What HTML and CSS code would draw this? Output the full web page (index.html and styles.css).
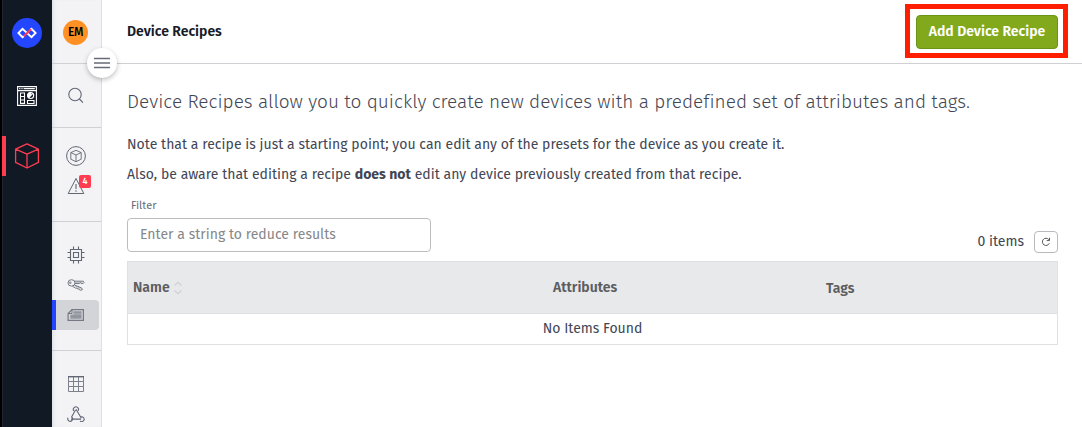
FILE: index.html
```html
<!DOCTYPE html>
<html lang="en">
<head>
<meta charset="utf-8">
<title>Device Recipes</title>
<link rel="stylesheet" href="styles.css">
</head>
<body>
<div class="app">
  <nav class="rail">
    <a class="rail-logo"><svg width="30" height="30" viewBox="0 0 30 30" fill="none"><circle cx="15" cy="15" r="15" fill="#2546ff"/><path d="M11.800 18.200 10.500 19.200 6.400 15l4.100-4.200 9 8.400L23.600 15l-4.100-4.200-1.300 1" stroke="#fff" stroke-width="1.900"/><path d="m11.800 18.200 7.200-6.900" stroke="#ff3b52" stroke-width="1.900"/></svg></a>
    <a class="rail-item"><svg width="20" height="20" viewBox="0 0 20 20" fill="none" stroke="#fff" stroke-width="1.1"><path d="M.6.6h18.8v18.8H.6zM.6 4.6h18.8M2.2 2.6h1.2M4.4 2.6h1.2M6.6 2.6h11.2M3.5 7h4v10.400h-4zM3.500 10.500h4M3.500 14h4M10.500 14.500h6.500v3h-6.500z"/><circle cx="13.700" cy="9.500" r="3"/><path d="M13.700 9.500V6.500a3 3 0 0 0-2.200 5.100z" fill="#fff"/><path d="m11.500 11.700 4.400-4.400"/></svg></a>
    <a class="rail-item active"><svg width="26" height="26" viewBox="0 0 26 26" fill="none" stroke="#ff3d51" stroke-width="1.3" stroke-linejoin="round"><path d="m13 .8 11.400 5.400v13.200L13 25 1.600 19.400V6.200zM1.600 6.200 13 11.200l11.400-5M13 11.200V25"/></svg></a>
  </nav>
  <aside class="side">
    <div class="side-user"><span class="avatar">EM</span></div>
    <div class="side-search"><svg width="18" height="18" viewBox="0 0 18 18" fill="none" stroke="#616673" stroke-width="1.100"><circle cx="8" cy="7.500" r="6.200"/><path d="m12.400 12 3.600 3.700"/></svg></div>
    <div class="side-group">
      <a class="side-item"><svg width="20" height="20" viewBox="0 0 20 20" fill="none" stroke="#616673"><circle cx="10" cy="10" r="9.400"/><path d="m10 4.300 5.200 2.300v6.600L10 15.700l-5.200-2.500V6.600zM4.800 6.600 10 9l5.200-2.400M10 9v6.700" stroke-width=".9"/></svg></a>
      <a class="side-item"><svg width="18" height="18" viewBox="0 0 18 18" fill="none" stroke="#616673"><path d="M9 1.500 16.800 16.500H1.200z"/><path d="M9 7v5M9 13.200v1.600" stroke-width="1.600" stroke="#8b8f98"/></svg><span class="badge">4</span></a>
    </div>
    <div class="side-group tools">
      <a class="side-item"><svg width="18" height="18" viewBox="0 0 18 18" fill="none" stroke="#616673" stroke-width="1.100"><path d="M3.500 3.500h11v11h-11zM6.500 6.500h5v5h-5zM6.500.5v3M11.500.5v3M6.500 14.500v3M11.500 14.500v3M.5 6.500h3M.5 11.500h3M14.500 6.500h3M14.500 11.500h3"/></svg></a>
      <a class="side-item"><svg width="18" height="14" viewBox="0 0 18 14" fill="none" stroke="#747983" stroke-width="1"><ellipse cx="4.500" cy="4.900" rx="3.500" ry="3.200"/><circle cx="3.300" cy="4.700" r=".8"/><path d="M7.400 3.200h8.900l.8 1.100-.9 1.200h-2l-.8-.7-.9.700H8M7.300 6.900l7.400 3.100.6 1.800-1.400.4-1.300-.2-.7-1.200-1.200.2-.8-1-1.200.2L5.300 8.100"/><path d="M8.500 4.300h6.700M8 7.800l5.600 2.600" stroke-width=".5"/></svg></a>
      <a class="side-item selected"><svg width="18" height="14" viewBox="0 0 18 14" fill="none" stroke="#747983" stroke-width="1.200"><path d="M5 1.600h11.400v10.800H1.100V5.500z"/><path d="M5 1.600v3.900H1.100" stroke-width="1"/><path d="M6.500 3.500h8v2h-8zM3.500 6.500h11v3.800h-11z" fill="#a2a5ad" stroke="none"/><path d="M6.500 4h8M6.500 6h8M3.300 8.100h11.200M3.300 10.100h11.200" stroke-width=".7"/></svg></a>
    </div>
    <div class="side-group last">
      <a class="side-item"><svg width="16" height="16" viewBox="0 0 16 16" fill="none" stroke="#7d818c"><path d="M.5.500h15v15H.5zM.5 5.500h15M.5 10.500h15M5.500.5v15M10.500.5v15"/><path d="M0 .7h16" stroke="#616673" stroke-width="1.400"/></svg></a>
      <a class="side-item"><svg width="18" height="16" viewBox="0 0 18 16" fill="none" stroke="#616673" stroke-width="1.100"><path d="M6.800 5A2.600 2.600 0 1 1 11.200 4.700M4.900 11.200a2.400 2.400 0 1 1-3.800.5M13.100 15a2.400 2.400 0 1 0 .3-3.800M9 3.300l5.400 9M8.500 4 4.300 11.400M4 13.100h10"/></svg></a>
    </div>
  </aside>
  <main class="main">
    <header class="top">
      <h1 class="title">Device Recipes</h1>
      <div class="highlight"><button class="add">Add Device Recipe</button></div>
    </header>
    <section class="content">
      <p class="lead">Device Recipes allow you to quickly create new devices with a predefined set of attributes and tags.</p>
      <p class="note first">Note that a recipe is just a starting point; you can edit any of the presets for the device as you create it.</p>
      <p class="note second">Also, be aware that editing a recipe <b>does not</b> edit any device previously created from that recipe.</p>
      <div class="toolbar">
        <label class="filter"><span class="filter-label">Filter</span><span class="input">Enter a string to reduce results</span></label>
        <div class="count"><span class="count-text">0 items</span><button class="refresh"><svg width="10" height="10" viewBox="0 0 10 10" fill="none" stroke="#555"><path d="M8.300 6.300A3.600 3.600 0 1 1 7.800 2.600M8.500.8v2.800H5.700"/></svg></button></div>
      </div>
      <div class="table">
        <div class="thead">
          <span class="th name">Name<svg width="10" height="14" viewBox="0 0 10 14" fill="none" stroke="#d0d1d4" stroke-width="1.200"><path d="m1.500 4.500 3.500-3.300 3.500 3.300M1.500 9.500 5 12.800l3.500-3.300"/></svg></span>
          <span class="th attributes">Attributes</span>
          <span class="th tags">Tags</span>
        </div>
        <div class="empty"><span class="empty-text">No Items Found</span></div>
      </div>
    </section>
  </main>
  <button class="menu"><svg width="16" height="12" viewBox="0 0 16 12" stroke="#666b77" stroke-width="1.400"><path d="M0 1.500h16M0 6h16M0 10.500h16"/></svg></button>
</div>
</body>
</html>
```

FILE: styles.css
```css
* { box-sizing: border-box; }
body { margin: 0; background: #fff; color: #424654; font: 400 14px/20px "Fira Sans", "Noto Sans", sans-serif; }
h1, p { margin: 0; }
button { font: inherit; padding: 0; }
svg { display: block; flex: none; }
.app { position: relative; display: flex; width: 1082px; height: 427px; overflow: hidden; }

.rail { width: 52px; flex: none; background: #111925; border-left: 2px solid #000; box-shadow: inset 1px 0 #202731; display: flex; flex-direction: column; padding-top: 18px; }
.rail-logo { height: 30px; padding-left: 10px; }
.rail-item { height: 40px; display: flex; align-items: center; justify-content: center; margin-top: 28px; }
.rail-item.active { margin-top: 20px; border-left: 4px solid #ff3d51; padding: 0 4px 0 0; }

.side { width: 50px; flex: none; background: #f3f3f6; border-right: 1px solid #dedfe2; box-shadow: inset 4px 0 4px -3px #d9dadd; display: flex; flex-direction: column; }
.side > div { flex: none; }
.side-user { height: 64px; border-bottom: 1px solid #cfd0d3; padding: 20px 0 0 11px; }
.avatar { display: block; width: 25px; height: 25px; border-radius: 50%; background: #ff9124; color: #000; font-size: 12px; font-weight: 500; line-height: 24px; letter-spacing: -.3px; text-align: center; }
.side-search { height: 64px; border-bottom: 1px solid #cfd0d3; padding: 23px 0 0 15px; }
.side-group { height: 94px; border-bottom: 1px solid #cfd0d3; padding-top: 13px; }
.side-group.tools { height: 129px; padding-top: 18px; }
.side-group.last { height: auto; border: 0; padding-top: 18px; }
.side-item { position: relative; height: 30px; width: 48px; display: flex; align-items: center; justify-content: center; }
.selected { width: 47px; background: #d2d4d7; border-left: 4px solid #2546ff; border-radius: 0 4px 4px 0; padding-right: 3px; }
.badge { position: absolute; left: 27px; top: 4px; width: 12px; height: 13px; border-radius: 2px; background: #ff3d51; color: #fff; font-size: 9px; font-weight: 600; line-height: 13px; text-align: center; }
.menu { position: absolute; left: 87px; top: 48px; width: 30px; height: 30px; border: 0; border-radius: 50%; background: #fff; box-shadow: 0 2px 5px rgba(0,0,0,.25); display: flex; align-items: center; justify-content: center; }

.main { flex: 1; min-width: 0; }
.top { height: 64px; border-bottom: 1px solid #cfd0d3; display: flex; justify-content: space-between; padding: 4px 14px 0 25px; }
.title { margin-top: 18px; color: #161b28; font-size: 14px; font-weight: 600; line-height: 20px; white-space: nowrap; }
.highlight { width: 163px; height: 54px; border: 5px solid #ff1e00; padding: 6px; }
.add { display: block; width: 142px; height: 34px; border: 1px solid #6c9415; border-radius: 4px; background: #82a91b; color: #fff; font-weight: 600; white-space: nowrap; }
.content { padding: 24px 24px 0 25px; white-space: nowrap; }
.lead { height: 28px; font-size: 19px; font-weight: 300; line-height: 28px; letter-spacing: .015px; }
.note { height: 20px; letter-spacing: .025px; }
.first { margin-top: 19px; }
.second { margin-top: 10px; }
.toolbar { display: flex; justify-content: space-between; align-items: flex-end; margin-top: 12px; height: 55px; }
.filter-label { display: block; padding-left: 4px; margin-bottom: 4px; font-size: 11px; line-height: 16px; color: #666b77; }
.input { display: block; width: 304px; height: 34px; border: 1px solid #bcbdbf; border-radius: 4px; padding-left: 12px; line-height: 31px; letter-spacing: .02px; color: #85878a; }
.count { display: flex; align-items: center; gap: 10px; margin-bottom: -1px; height: 22px; }
.refresh { width: 24px; height: 22px; border: 1px solid #b9babd; border-radius: 4px; background: #fff; display: flex; align-items: center; justify-content: center; }
.table { margin-top: 9px; height: 84px; border: 1px solid #dfe0e2; }
.thead { height: 52px; background: #e8e9eb; border-bottom: 1px solid #dfe0e2; display: grid; grid-template-columns: 420px 273px 1fr; align-items: center; padding-left: 5px; font-weight: 600; color: #5c5d60; }
.name { display: flex; align-items: center; gap: 3px; }
.tags { padding-top: 2px; }
.empty { height: 30px; line-height: 29px; text-align: center; }
```
